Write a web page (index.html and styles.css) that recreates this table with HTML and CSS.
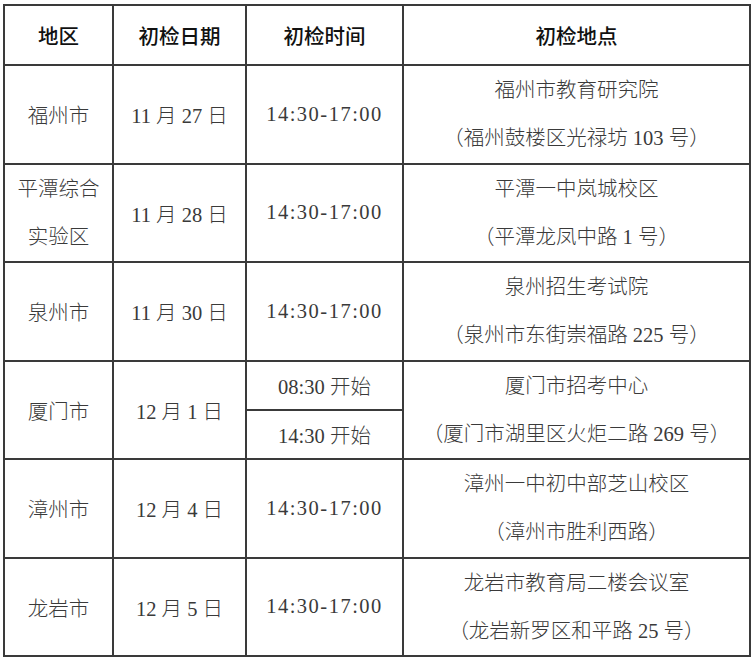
FILE: index.html
```html
<!DOCTYPE html>
<html lang="zh-CN">
<head>
<meta charset="utf-8">
<title>初检安排</title>
<link rel="stylesheet" href="styles.css">
</head>
<body>
<table class="schedule">
  <colgroup>
    <col class="c-area">
    <col class="c-date">
    <col class="c-time">
    <col class="c-place">
  </colgroup>
  <thead>
    <tr class="head">
      <th>地区</th>
      <th>初检日期</th>
      <th>初检时间</th>
      <th>初检地点</th>
    </tr>
  </thead>
  <tbody>
    <tr class="row">
      <td>福州市</td>
      <td>11 月 27 日</td>
      <td class="time">14:30-17:00</td>
      <td class="place"><div class="line">福州市教育研究院</div><div class="line">（福州鼓楼区光禄坊 103 号）</div></td>
    </tr>
    <tr class="row">
      <td class="two">平潭综合<br>实验区</td>
      <td>11 月 28 日</td>
      <td class="time">14:30-17:00</td>
      <td class="place"><div class="line">平潭一中岚城校区</div><div class="line">（平潭龙凤中路 1 号）</div></td>
    </tr>
    <tr class="row">
      <td>泉州市</td>
      <td>11 月 30 日</td>
      <td class="time">14:30-17:00</td>
      <td class="place"><div class="line">泉州招生考试院</div><div class="line">（泉州市东街崇福路 225 号）</div></td>
    </tr>
    <tr class="half">
      <td rowspan="2">厦门市</td>
      <td rowspan="2">12 月 1 日</td>
      <td>08:30 开始</td>
      <td rowspan="2" class="place"><div class="line">厦门市招考中心</div><div class="line">（厦门市湖里区火炬二路 269 号）</div></td>
    </tr>
    <tr class="half">
      <td>14:30 开始</td>
    </tr>
    <tr class="row">
      <td>漳州市</td>
      <td>12 月 4 日</td>
      <td class="time">14:30-17:00</td>
      <td class="place"><div class="line">漳州一中初中部芝山校区</div><div class="line">（漳州市胜利西路）</div></td>
    </tr>
    <tr class="row">
      <td>龙岩市</td>
      <td>12 月 5 日</td>
      <td class="time">14:30-17:00</td>
      <td class="place"><div class="line">龙岩市教育局二楼会议室</div><div class="line">（龙岩新罗区和平路 25 号）</div></td>
    </tr>
  </tbody>
</table>
</body>
</html>
```

FILE: styles.css
```css
html, body {
  margin: 0;
  padding: 0;
  background: #ffffff;
}

body {
  padding: 4px 0 0 3px;
}

.schedule {
  border-collapse: collapse;
  table-layout: fixed;
  width: 746px;
  font-family: "Liberation Serif", "Noto Sans CJK SC", serif;
  font-size: 20.5px;
  color: #3a3a3a;
}

.c-area { width: 109px; }
.c-date { width: 133px; }
.c-time { width: 157px; }
.c-place { width: 347px; }

.schedule th,
.schedule td {
  border: 2px solid #3a3a3a;
  padding: 0;
  text-align: center;
  vertical-align: middle;
}

.schedule th {
  font-family: "Noto Sans CJK SC", sans-serif;
  font-weight: 500;
  font-size: 20.5px;
  color: #111111;
}

.head { height: 60px; }
.row { height: 98.5px; }
.half { height: 49.25px; }

.schedule td {
  font-weight: 300;
}

.time {
  letter-spacing: 1.5px;
}

.two {
  line-height: 48px;
}

.line {
  line-height: 48px;
}
```
